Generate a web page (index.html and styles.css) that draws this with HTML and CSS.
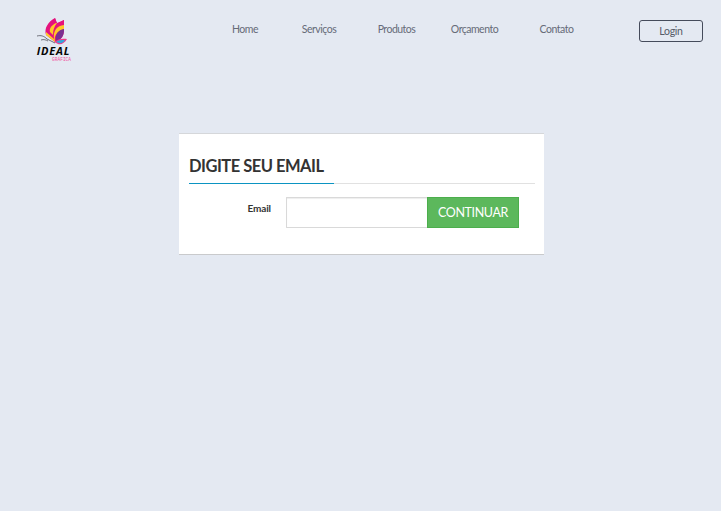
FILE: index.html
```html
<!DOCTYPE html>
<html lang="pt-BR">
<head>
<meta charset="utf-8">
<title>Ideal</title>
<link rel="stylesheet" href="styles.css">
</head>
<body>
<header class="header">
  <a class="logo">
    <svg class="butterfly" viewBox="0 0 36 28" aria-hidden="true">
      <path fill="#e5127d" d="M19 1C12 5 8 11 10 18l9 7c6-2 9-6 9-11V3l-7 4z"/>
      <path fill="#e5127d" d="M19 1l2 5 7-3v5l-9 7-6-5z"/>
      <path fill="#ffc928" d="M28 8c-7 1-11 5-10 14l-8-7v3l9 7c-1-6 1-10 9-13zM20 6c-4 2-7 5-6 9l3 3c0-5 1-8 4-12z"/>
      <path fill="#7a3191" d="M28 12c-6 1-9 5-8 12 5-1 8-5 8-12z"/>
      <path fill="#ef3c8c" d="M18 25c4-3 8-4 13-3-2 4-6 6-9 5z"/>
      <path fill="#31a9dc" d="M20 25c3-2 5-2 9-2-1 2-4 4-6 3z"/>
      <path fill="none" stroke="#50515a" stroke-width=".8" d="M1 19c4-1 7 0 10 3l8 4M5 23c3-1 5 0 7 1"/>
    </svg>
    <span class="logo-name">IDEAL</span>
    <span class="logo-sub">GRÁFICA</span>
  </a>
  <nav class="nav">
    <a>Home</a><a>Serviços</a><a>Produtos</a><a>Orçamento</a><a>Contato</a>
  </nav>
  <a class="login">Login</a>
</header>
<main class="panel">
  <h1 class="title"><span>Digite seu email</span></h1>
  <form class="form">
    <label class="label" for="email">Email</label>
    <input class="input" id="email" type="text">
    <button class="submit" type="button">CONTINUAR</button>
  </form>
</main>
</body>
</html>
```
FILE: styles.css
```css
* { box-sizing: border-box; }
body {
  margin: 0;
  height: 511px;
  overflow: hidden;
  background: #e4e9f2;
  font-family: Lato, sans-serif;
  color: #333;
}
.header {
  display: flex;
  align-items: flex-start;
  height: 133px;
  padding: 17px 18px 0 35px;
}
.logo { display: flex; flex-direction: column; width: 37px; align-items: center; }
.butterfly { width: 36px; height: 28px; }
.logo-name {
  font: italic bold 11px/12px "Open Sans", sans-serif;
  height: 10px;
  letter-spacing: .8px;
  color: #050505;
}
.logo-sub {
  align-self: flex-end;
  margin: 2px 1px 0 0;
  font: 4.5px/5px "Liberation Mono", monospace;
  color: #f052a0;
}
.nav {
  display: grid;
  grid-template-columns: 71px 77px 78px 78px 86px;
  margin: 3px 0 0 137.5px;
  text-align: center;
  font-size: 10.5px;
  letter-spacing: -.5px;
  line-height: 18px;
  color: #666b78;
}
.login {
  width: 64px;
  height: 22px;
  margin: 3px 0 0 auto;
  border: 1px solid #454b5b;
  border-radius: 3px;
  text-align: center;
  font-size: 10.5px;
  letter-spacing: -.3px;
  line-height: 20px;
  color: #555b68;
}
.panel {
  width: 365px;
  height: 122px;
  margin-left: 179px;
  padding: 20px 9px 0 10px;
  background: #fff;
  border-top: 1px solid #d5d7da;
  border-bottom: 1px solid #c9cacc;
}
.title {
  height: 30px;
  margin: 0 0 13px;
  border-bottom: 1px solid #e1e1e1;
  font-size: 16.5px;
  letter-spacing: -.5px;
  line-height: 24px;
  text-transform: uppercase;
}
.title span {
  display: block;
  width: 145px;
  height: 30px;
  border-bottom: 1px solid #0b94c2;
  white-space: nowrap;
}
.form { display: flex; }
.label {
  width: 82px;
  margin-right: 15px;
  text-align: right;
  font-size: 10px;
  font-weight: bold;
  letter-spacing: -.1px;
  line-height: 23px;
}
.input {
  width: 141px;
  height: 31px;
  padding: 4px 8px;
  border: 1px solid #d9d9d9;
  border-right: 0;
  border-radius: 1px 0 0 1px;
  background: #fff;
  box-shadow: inset 0 1px 1px #eee;
}
.submit {
  width: 92px;
  height: 31px;
  padding: 0;
  border: 1px solid #4cae4c;
  background: #5cb85c;
  color: #fff;
  font: 12.5px/29px Lato, sans-serif;
  letter-spacing: -.4px;
}
```
